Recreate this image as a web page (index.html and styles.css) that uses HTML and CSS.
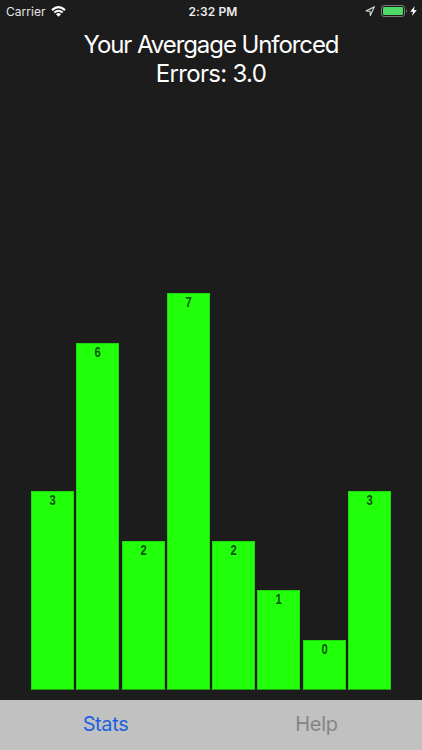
FILE: index.html
```html
<!DOCTYPE html>
<html lang="en">

<head>
    <meta charset="utf-8">
    <title>Stats</title>
    <link rel="stylesheet" href="styles.css">
</head>

<body>
    <div class="status-bar">
        <div class="status-left">
            <span class="carrier">Carrier</span>
            <svg class="wifi" width="15" height="11" viewBox="0 0 15 11">
                <path d="M1 4.1 Q7.5 -1.7 14 4.1" fill="none" stroke="#fff" stroke-width="2.1" />
                <path d="M3.3 6.5 Q7.5 2.8 11.7 6.5" fill="none" stroke="#fff" stroke-width="1.9" />
                <path d="M5 8.2 Q7.5 6 10 8.2 L7.5 10.8 Z" fill="#fff" />
            </svg>
        </div>
        <div class="clock">2:32 PM</div>
        <div class="status-right">
            <svg class="location" width="10" height="10" viewBox="0 0 10 10">
                <path d="M0.8 5 L9.2 0.9 L5.4 9.4 L5 5.2 Z" fill="none" stroke="#ddd" stroke-width="1.1" />
            </svg>
            <svg class="battery" width="28" height="12" viewBox="0 0 28 12">
                <rect x="0.5" y="0.5" width="23" height="11" rx="2.5" fill="none" stroke="#777" />
                <rect x="2" y="2" width="20" height="8" rx="1" fill="#4cd964" />
                <path d="M25 4 Q27 6 25 8 Z" fill="#777" />
            </svg>
            <svg class="bolt" width="7" height="10" viewBox="0 0 7 10">
                <path d="M4.7 0 L0.2 5.7 H3 L2 10 L6.8 4.1 H3.9 Z" fill="#fff" />
            </svg>
        </div>
    </div>

    <h1><span class="line-one">Your Avergage Unforced</span><br><span class="line-two">Errors: 3.0</span></h1>

    <!-- Bar Chart Container -->
    <div class="bar-chart" id="barChart"></div>

    <div class="tab-bar">
        <div class="tab active">Stats</div>
        <div class="tab">Help</div>
    </div>

    <script>
        // Unforced errors for each match
        var errors = [3, 6, 2, 7, 2, 1, 0, 3];
        var unit = 49.56;
        var chart = document.getElementById('barChart');

        // A match with no errors still gets a bar one unit high
        errors.forEach(function (count) {
            var bar = document.createElement('div');
            var label = document.createElement('span');
            bar.className = 'bar';
            bar.style.height = (count + 1) * unit + 'px';
            label.className = 'bar-label';
            label.textContent = count;
            bar.appendChild(label);
            chart.appendChild(bar);
        });
    </script>
</body>

</html>
```
FILE: styles.css
```css
body {
    margin: 0;
    height: 750px;
    display: flex;
    flex-direction: column;
    overflow: hidden;
    background-color: #1c1c1c;
    color: #fff;
    font-family: Inter, "Liberation Sans", sans-serif;
}

.status-bar {
    display: grid;
    grid-template-columns: 1fr auto 1fr;
    align-items: center;
    height: 22px;
    padding: 0 5px 0 6px;
    font-size: 12px;
}

.status-left,
.status-right {
    display: flex;
    align-items: center;
}

.status-right {
    justify-content: flex-end;
}

.carrier {
    color: #e4e4e4;
    letter-spacing: 0.05px;
}

.wifi {
    margin-left: 5px;
}

.clock {
    padding-left: 3px;
    font-weight: 600;
    letter-spacing: 0.1px;
    color: #eee;
}

.location {
    margin-right: 6px;
}

.bolt {
    margin-left: 1px;
}

h1 {
    margin: 8px 0 0;
    text-align: center;
    font-size: 24px;
    font-weight: 400;
    line-height: 29px;
}

.line-one {
    letter-spacing: -1.08px;
}

.line-two {
    letter-spacing: -0.7px;
}

.bar-chart {
    flex: 1;
    display: flex;
    justify-content: space-between;
    align-items: flex-end;
    padding: 0 31px 10.5px;
}

.bar {
    box-sizing: border-box;
    width: 43px;
    text-align: center;
    background-color: #22ff0a;
    border: 1px solid #20d80e;
    border-width: 1px 0.5px;
    border-bottom-color: #1c9a12;
}

.bar-label {
    display: block;
    font: bold 15.5px/16px "Liberation Sans", Arial, sans-serif;
    color: #075308;
    transform: scaleX(0.72);
}

.tab-bar {
    display: flex;
    height: 50px;
    background-color: #c1c1c1;
}

.tab {
    flex: 1;
    text-align: center;
    font-size: 20px;
    line-height: 48px;
    color: #858585;
    letter-spacing: -0.25px;
}

.tab.active {
    color: #1c62e0;
    letter-spacing: -0.4px;
}
```
